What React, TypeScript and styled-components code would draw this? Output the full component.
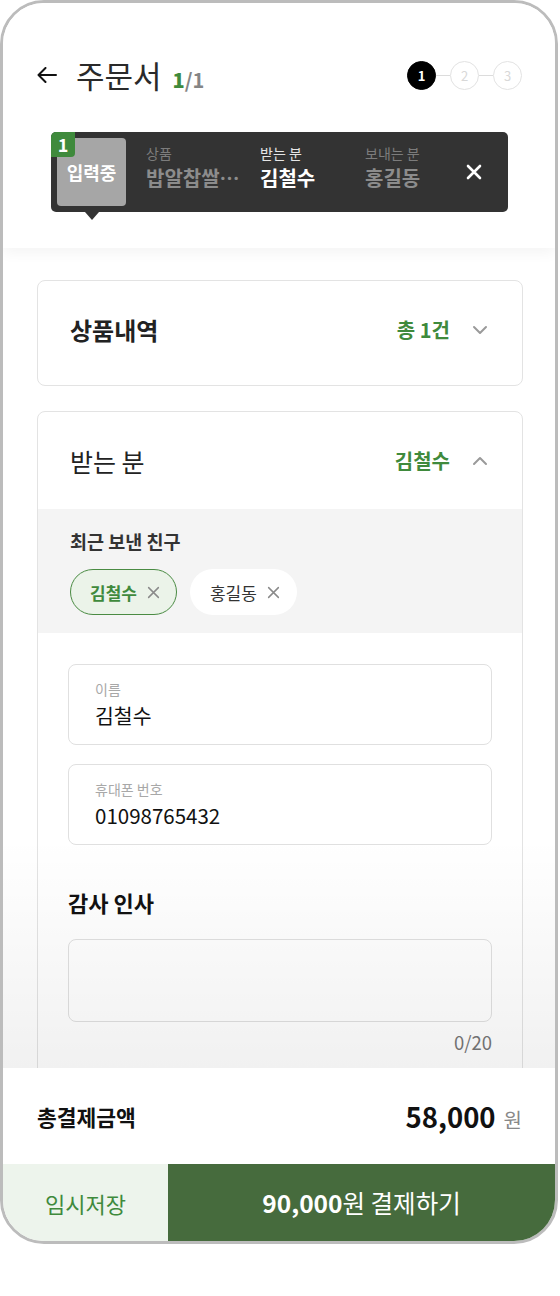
import styled, { createGlobalStyle, css } from "styled-components";

const GlobalStyle = createGlobalStyle`
  html, body {
    margin: 0;
    padding: 0;
    background: #fff;
  }
  body {
    font-family: "Noto Sans CJK KR", "Noto Sans", sans-serif;
    color: #111;
  }
  * { box-sizing: border-box; }
`;

const GREEN = "#3f8a3c";

const Frame = styled.div`
  width: 558px;
  height: 1244px;
  border: 3px solid #bcbcbc;
  border-radius: 44px;
  overflow: hidden;
  background: #fff;
  display: flex;
  flex-direction: column;
`;

/* header */
const Header = styled.header`
  flex-shrink: 0;
  position: relative;
  z-index: 2;
  padding: 50px 33px 36px;
  background: #fff;
  box-shadow: 0 4px 14px rgba(0 0 0 / 0.05);
`;

const TitleRow = styled.div`
  height: 44px;
  display: flex;
  align-items: center;
  justify-content: space-between;
`;

const TitleLeft = styled.div`
  display: flex;
  align-items: center;
  gap: 19px;
  padding-left: 1px;
`;

const TitleText = styled.div`
  display: flex;
  align-items: baseline;
  gap: 11px;
`;

const Title = styled.h1`
  margin: 0;
  font-size: 31px;
  font-weight: 400;
  color: #2a2a2a;
  line-height: 1.2;
`;

const Count = styled.span`
  font-size: 20px;
  font-weight: 700;
  color: #858585;
  & > b { color: ${GREEN}; }
`;

const Steps = styled.div`
  display: flex;
  align-items: center;
`;

const StepCircle = styled.div<{ $active?: boolean }>`
  width: 29px;
  height: 29px;
  border-radius: 50%;
  display: flex;
  align-items: center;
  justify-content: center;
  font-size: 13px;
  line-height: 1;
  border: 1.5px solid #e2e2e2;
  color: #d8d8d8;
  ${({ $active }) => $active && css`
    background: #000;
    border-color: #000;
    color: #fff;
    font-weight: 700;
  `}
`;

const StepLine = styled.div`
  width: 14px;
  height: 1px;
  background: #dcdcdc;
`;

const Tooltip = styled.div`
  position: relative;
  margin: 35px 14px 0 15px;
  height: 80px;
  padding: 6px 26px 6px 6px;
  background: #333;
  border-radius: 5px;
  display: flex;
  align-items: center;
`;

const Badge = styled.div`
  position: absolute;
  top: 0;
  left: 0;
  width: 24px;
  height: 25px;
  background: ${GREEN};
  border-radius: 5px 0 4px 0;
  color: #fff;
  font-size: 18px;
  font-weight: 700;
  line-height: 25px;
  text-align: center;
`;

const Pointer = styled.div`
  position: absolute;
  left: 34px;
  bottom: -8px;
  width: 0;
  height: 0;
  border-left: 7px solid transparent;
  border-right: 7px solid transparent;
  border-top: 8px solid #333;
`;

const StatusBox = styled.div`
  width: 69px;
  height: 68px;
  flex-shrink: 0;
  border-radius: 4px;
  background: #a6a6a6;
  color: #fff;
  font-size: 18px;
  font-weight: 700;
  display: flex;
  align-items: center;
  justify-content: center;
`;

const Field = styled.div<{ $width: number; $first?: boolean }>`
  align-self: flex-start;
  margin-top: 6px;
  margin-left: ${({ $first }) => ($first ? 20 : 0)}px;
  width: ${({ $width }) => $width}px;
  flex-shrink: 0;
  white-space: nowrap;
`;

const FieldLabel = styled.div<{ $current?: boolean }>`
  font-size: 14px;
  line-height: 19px;
  color: ${({ $current }) => ($current ? "#e6e6e6" : "#7c7c7c")};
`;

const FieldValue = styled.div<{ $current?: boolean }>`
  margin-top: 2px;
  font-size: 20px;
  line-height: 26px;
  font-weight: 700;
  color: ${({ $current }) => ($current ? "#fff" : "#8c8c8c")};
`;

const CloseButton = styled.button`
  margin-left: auto;
  padding: 0;
  border: none;
  background: none;
  display: flex;
`;

/* scroll area */
const Scroll = styled.main`
  flex: 1;
  position: relative;
  overflow: hidden;
  padding: 32px 32px 0 34px;
  display: flex;
  flex-direction: column;
  gap: 25px;
  &::after {
    content: "";
    position: absolute;
    left: 0;
    right: 0;
    bottom: 0;
    height: 230px;
    pointer-events: none;
    background: linear-gradient(to bottom, rgba(0 0 0 / 0), rgba(0 0 0 / 0.055));
  }
`;

const Card = styled.section<{ $collapsed?: boolean }>`
  flex-shrink: 0;
  border: 1px solid #e3e3e3;
  border-radius: 8px;
  background: #fff;
  overflow: hidden;
  padding-bottom: ${({ $collapsed }) => ($collapsed ? 7 : 0)}px;
`;

const CardHeader = styled.div`
  height: 97px;
  padding: 0 34px 0 32px;
  display: flex;
  align-items: center;
`;

const CardTitle = styled.h2<{ $bold?: boolean }>`
  margin: 0;
  flex: 1;
  color: #222;
  font-size: ${({ $bold }) => ($bold ? 24 : 25)}px;
  font-weight: ${({ $bold }) => ($bold ? 700 : 400)};
`;

const Summary = styled.span`
  margin-right: 22px;
  font-size: 20px;
  font-weight: 700;
  color: ${GREEN};
`;

const Recent = styled.div`
  background: #f4f4f4;
  padding: 20px 32px 18px;
`;

const SectionLabel = styled.div`
  font-size: 18.5px;
  line-height: 25px;
  font-weight: 700;
  color: #333;
`;

const ChipRow = styled.div`
  margin-top: 15px;
  display: flex;
  gap: 13px;
`;

const Chip = styled.div<{ $selected?: boolean }>`
  height: 46px;
  padding: 0 16px 0 19px;
  border-radius: 23px;
  display: inline-flex;
  align-items: center;
  gap: 10px;
  font-size: 17px;
  background: #fff;
  border: 1.5px solid transparent;
  color: #333;
  ${({ $selected }) => $selected && css`
    background: #ebf3e9;
    border-color: #4a8b43;
    color: ${GREEN};
    font-weight: 700;
  `}
`;

const Form = styled.div`
  padding: 31px 30px 200px;
`;

const InputBox = styled.div`
  height: 81px;
  padding: 14px 26px 0;
  border: 1px solid #e0e0e0;
  border-radius: 8px;
  background: #fff;
  & + & { margin-top: 19px; }
`;

const InputLabel = styled.div`
  font-size: 14px;
  line-height: 20px;
  color: #a8a8a8;
`;

const InputValue = styled.div`
  margin-top: 1px;
  font-size: 20.5px;
  line-height: 30px;
  color: #111;
`;

const GreetingTitle = styled.h3`
  margin: 42px 0 0;
  font-size: 22px;
  line-height: 30px;
  font-weight: 700;
  color: #111;
`;

const Message = styled.textarea`
  display: block;
  margin-top: 22px;
  width: 100%;
  height: 83px;
  resize: none;
  border: 1px solid #e0e0e0;
  border-radius: 8px;
  background: #fff;
  outline: none;
`;

const Counter = styled.div`
  margin-top: 9px;
  text-align: right;
  font-size: 18.5px;
  line-height: 22px;
  color: #777;
`;

/* footer */
const Footer = styled.footer`
  flex-shrink: 0;
  position: relative;
  z-index: 2;
  height: 96px;
  padding: 0 33px 0 34px;
  background: #fff;
  display: flex;
  align-items: center;
  justify-content: space-between;
`;

const TotalLabel = styled.span`
  font-size: 21.5px;
  font-weight: 700;
  color: #111;
`;

const Amount = styled.span`
  font-size: 27.5px;
  font-weight: 700;
  color: #111;
  & > small {
    margin-left: 8px;
    font-size: 20px;
    font-weight: 400;
    color: #888;
  }
`;

const ButtonRow = styled.div`
  flex-shrink: 0;
  height: 77px;
  display: flex;
`;

const ActionButton = styled.button<{ $primary?: boolean }>`
  border: none;
  font-family: inherit;
  ${({ $primary }) => $primary ? css`
    flex: 1;
    background: #466b3d;
    color: #fff;
    font-size: 24.5px;
    & > b { font-weight: 700; }
  ` : css`
    width: 165px;
    background: #edf4ec;
    color: ${GREEN};
    font-size: 22px;
  `}
`;

function Chevron({ up }: { up?: boolean }) {
  return (
    <svg width="16" height="16" viewBox="0 0 16 16" fill="none">
      <polyline
        points={up ? "2,11 8,5 14,11" : "2,5 8,11 14,5"}
        stroke="#9a9a9a"
        strokeWidth="2"
        strokeLinecap="round"
        strokeLinejoin="round"
      />
    </svg>
  );
}

function Cross({ size, color, width }: { size: number; color: string; width: number }) {
  return (
    <svg width={size} height={size} viewBox="0 0 16 16" fill="none">
      <path d="M2 2L14 14M14 2L2 14" stroke={color} strokeWidth={width} strokeLinecap="round" />
    </svg>
  );
}

export default function App() {
  const recent = [
    { name: "김철수", selected: true },
    { name: "홍길동", selected: false },
  ];

  return (
    <>
      <GlobalStyle />
      <Frame>
        <Header>
          <TitleRow>
            <TitleLeft>
              <svg width="20" height="16" viewBox="0 0 20 16" fill="none">
                <path d="M19 8H1.5M8.5 1L1.5 8L8.5 15" stroke="#111" strokeWidth="2" strokeLinecap="round" strokeLinejoin="round" />
              </svg>
              <TitleText>
                <Title>주문서</Title>
                <Count><b>1</b>/1</Count>
              </TitleText>
            </TitleLeft>
            <Steps>
              <StepCircle $active>1</StepCircle>
              <StepLine />
              <StepCircle>2</StepCircle>
              <StepLine />
              <StepCircle>3</StepCircle>
            </Steps>
          </TitleRow>

          <Tooltip>
            <StatusBox>입력중</StatusBox>
            <Badge>1</Badge>
            <Field $width={114} $first>
              <FieldLabel>상품</FieldLabel>
              <FieldValue>밥알찹쌀…</FieldValue>
            </Field>
            <Field $width={105}>
              <FieldLabel $current>받는 분</FieldLabel>
              <FieldValue $current>김철수</FieldValue>
            </Field>
            <Field $width={80}>
              <FieldLabel>보내는 분</FieldLabel>
              <FieldValue>홍길동</FieldValue>
            </Field>
            <CloseButton>
              <Cross size={16} color="#fff" width={2.6} />
            </CloseButton>
            <Pointer />
          </Tooltip>
        </Header>

        <Scroll>
          <Card $collapsed>
            <CardHeader>
              <CardTitle $bold>상품내역</CardTitle>
              <Summary>총 1건</Summary>
              <Chevron />
            </CardHeader>
          </Card>

          <Card>
            <CardHeader>
              <CardTitle>받는 분</CardTitle>
              <Summary>김철수</Summary>
              <Chevron up />
            </CardHeader>

            <Recent>
              <SectionLabel>최근 보낸 친구</SectionLabel>
              <ChipRow>
                {recent.map(r => (
                  <Chip key={r.name} $selected={r.selected}>
                    {r.name}
                    <Cross size={13} color="#8a8a8a" width={1.8} />
                  </Chip>
                ))}
              </ChipRow>
            </Recent>

            <Form>
              <InputBox>
                <InputLabel>이름</InputLabel>
                <InputValue>김철수</InputValue>
              </InputBox>
              <InputBox>
                <InputLabel>휴대폰 번호</InputLabel>
                <InputValue>01098765432</InputValue>
              </InputBox>

              <GreetingTitle>감사 인사</GreetingTitle>
              <Message />
              <Counter>0/20</Counter>
            </Form>
          </Card>
        </Scroll>

        <Footer>
          <TotalLabel>총결제금액</TotalLabel>
          <Amount>58,000<small>원</small></Amount>
        </Footer>
        <ButtonRow>
          <ActionButton>임시저장</ActionButton>
          <ActionButton $primary><b>90,000</b>원 결제하기</ActionButton>
        </ButtonRow>
      </Frame>
    </>
  );
}
